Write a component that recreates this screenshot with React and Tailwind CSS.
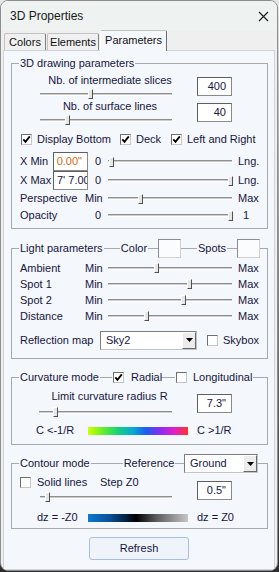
import React from "react";

const ink = "text-[#161640]";

function Checkbox({ checked }) {
  return (
    <span className="inline-flex w-[11px] h-[11px] shrink-0 items-center justify-center bg-white border border-[#6f6f6f] border-b-[#c6c6c6] border-r-[#c6c6c6]">
      {checked && (
        <svg width="9" height="9" viewBox="0 0 9 9">
          <path d="M1.3 4.3 L3.5 6.8 L7.8 1.4" fill="none" stroke="#000" strokeWidth="1.8" />
        </svg>
      )}
    </span>
  );
}

function Slider({ className = "", pos }) {
  // pos = thumb centre, px from the left end of the track
  return (
    <div className={"relative h-[12px] flex items-center " + className}>
      <div className="w-full h-[3px] border-t border-[#8e8e8e] bg-[#cdcdcd] border-b border-b-white" />
      <div
        className="absolute top-[1px] w-[5px] h-[10px] bg-[#e6e6e6] border border-t-white border-l-white border-r-[#505050] border-b-[#505050]"
        style={{ left: pos - 2 }}
      />
    </div>
  );
}

function Box({ children, className = "" }) {
  return (
    <div
      className={
        "h-[19px] w-[35px] shrink-0 bg-white border border-[#8a8a8a] border-t-[#5f5f5f] border-l-[#5f5f5f] text-[11px] leading-[17px] text-right pr-[5px] overflow-hidden whitespace-nowrap " +
        ink +
        " " +
        className
      }
    >
      {children}
    </div>
  );
}

function Select({ value, className = "" }) {
  return (
    <div className={"flex shrink-0 h-[19px] bg-white border border-[#7d7d7d] border-b-[#c4c4c4] border-r-[#c4c4c4] " + className}>
      <span className={"flex-1 pl-[5px] text-[11px] leading-[17px] " + ink}>{value}</span>
      <span className="w-[14px] h-full flex items-center justify-center bg-[#ececec] border border-t-white border-l-white border-r-[#6a6a6a] border-b-[#6a6a6a]">
        <svg width="7" height="4" viewBox="0 0 7 4">
          <path d="M0 0h7L3.5 4z" fill="#000" />
        </svg>
      </span>
    </div>
  );
}

function Swatch({ className = "" }) {
  return <span className={"shrink-0 w-[23px] h-[19px] bg-[#fbfcfe] border border-[#8c8c8c] border-b-[#d0d0d0] border-r-[#d0d0d0] " + className} />;
}

function Group({ header, className = "", children }) {
  return (
    <div className={"relative ml-[7px] w-[257px] border border-[#a9a9a9] " + className}>
      {header}
      {children}
    </div>
  );
}

// fixed slot on the group's top line; the text itself masks the line
function Legend({ children, className = "", center }) {
  return (
    <span className={"shrink-0 flex " + (center ? "justify-center " : "") + className}>
      <span className="shrink-0 bg-[#f4f7fb] px-[1px]">{children}</span>
    </span>
  );
}

function MinMaxRow({ label, pos }) {
  return (
    <div className="flex items-center h-[16px] pl-[8px]">
      <span className="w-[65px]">{label}</span>
      <span className="w-[23px]">Min</span>
      <Slider className="w-[124px]" pos={pos} />
      <span className="ml-[6px]">Max</span>
    </div>
  );
}

export default function App() {
  return (
    <div className="w-[279px] h-[572px] bg-linear-to-b from-[#e6e6e6] to-[#2c2c2c] font-['Liberation_Sans',Arial,sans-serif]">
      <div className="w-[278px] h-[571px] rounded-[8px] border border-[#8d8d8d] bg-[#efefef] overflow-hidden flex flex-col">
        {/* title bar */}
        <div className="h-[30px] shrink-0 bg-[#eef2f1] flex items-center justify-between pl-[9px] pr-[8px]">
          <span className="text-[12px] text-[#1a1a1a]">3D Properties</span>
          <svg width="11" height="11" viewBox="0 0 11 11">
            <path d="M1 1L10 10M10 1L1 10" stroke="#1a1a1a" strokeWidth="1.1" />
          </svg>
        </div>

        {/* tabs */}
        <div className="h-[19px] shrink-0 flex items-end pl-[3px] text-[11px] text-[#111]">
          <div className="w-[42px] h-[17px] flex items-center justify-center border border-b-0 border-[#c2c2c2] border-r-[#7f7f7f] rounded-t-[2px] bg-[#f0f0f0]">
            Colors
          </div>
          <div className="ml-[1px] w-[52px] h-[17px] flex items-center justify-center border border-b-0 border-[#c2c2c2] border-r-[#7f7f7f] rounded-t-[2px] bg-[#f0f0f0]">
            Elements
          </div>
          <div className="relative z-10 ml-[1px] -mb-[1px] w-[67px] h-[21px] pb-[2px] flex items-center justify-center border border-b-0 border-[#c2c2c2] border-l-white border-r-[#6f6f6f] rounded-t-[2px] bg-[#f4f7fb]">
            Parameters
          </div>
        </div>

        {/* panel */}
        <div className={"flex-1 ml-[2px] w-[272px] border border-[#cfd2d6] bg-[#f4f7fb] text-[11px] leading-[13px] whitespace-nowrap " + ink}>
          {/* 3D drawing parameters */}
          <Group
            className="mt-[12px] pt-[10px] pb-[4px]"
            header={
              <div className="absolute left-[7px] -top-[7px] h-[13px] flex items-center">
                <Legend>3D drawing parameters</Legend>
              </div>
            }
          >
            <div className="flex">
              <div className="ml-[28px] w-[140px]">
                <div className="text-center h-[13px]">Nb. of intermediate slices</div>
                <Slider className="mt-[1px] w-[132px]" pos={50} />
              </div>
              <Box className="ml-[17px] mt-[3px]">400</Box>
            </div>
            <div className="flex">
              <div className="ml-[28px] w-[140px]">
                <div className="text-center h-[13px]">Nb. of surface lines</div>
                <Slider className="mt-[1px] w-[132px]" pos={27} />
              </div>
              <Box className="ml-[17px] mt-[3px]">40</Box>
            </div>
            <div className="mt-[7px] h-[13px] pl-[9px] flex items-center">
              <span className="w-[99px] flex items-center gap-[5px]">
                <Checkbox checked />
                Display Bottom
              </span>
              <span className="w-[51px] flex items-center gap-[5px]">
                <Checkbox checked />
                Deck
              </span>
              <span className="flex items-center gap-[5px]">
                <Checkbox checked />
                Left and Right
              </span>
            </div>
            <div className="mt-[6px] h-[19px] pl-[8px] flex items-center">
              <span className="w-[33px]">X Min</span>
              <Box className="h-[18px] !text-[#cc6a12]">0.00"</Box>
              <span className="w-[20px] pl-[7px]">0</span>
              <Slider className="w-[124px]" pos={3} />
              <span className="ml-[6px]">Lng.</span>
            </div>
            <div className="h-[19px] pl-[8px] flex items-center">
              <span className="w-[33px]">X Max</span>
              <Box className="h-[17px] !text-left !pr-0 pl-[3px] leading-[15px]">7' 7.00"</Box>
              <span className="w-[20px] pl-[7px]">0</span>
              <Slider className="w-[124px]" pos={122} />
              <span className="ml-[6px]">Lng.</span>
            </div>
            <div className="flex items-center h-[17px] pl-[8px]">
              <span className="w-[65px]">Perspective</span>
              <span className="w-[23px]">Min</span>
              <Slider className="w-[124px]" pos={32} />
              <span className="ml-[6px]">Max</span>
            </div>
            <div className="flex items-center h-[17px] pl-[8px]">
              <span className="w-[65px]">Opacity</span>
              <span className="w-[23px] pl-[10px]">0</span>
              <Slider className="w-[124px]" pos={122} />
              <span className="ml-[11px]">1</span>
            </div>
          </Group>

          {/* Light parameters */}
          <Group
            className="mt-[19px] pt-[11px] pb-[8px]"
            header={
              <div className="absolute left-[7px] -top-[10px] h-[19px] flex items-center">
                <Legend className="w-[80px]">Light parameters</Legend>
                <Legend center className="ml-[22px] w-[26px]">Color</Legend>
                <Swatch className="ml-[11px]" />
                <Legend center className="ml-[17px] w-[28px]">Spots</Legend>
                <Swatch className="ml-[11px]" />
              </div>
            }
          >
            <MinMaxRow label="Ambient" pos={48} />
            <MinMaxRow label="Spot 1" pos={81} />
            <MinMaxRow label="Spot 2" pos={75} />
            <MinMaxRow label="Distance" pos={38} />
            <div className="mt-[6px] h-[20px] pl-[8px] flex items-center">
              <span className="w-[80px]">Reflection map</span>
              <Select value="Sky2" className="w-[97px]" />
              <span className="ml-[10px] flex">
                <Checkbox />
              </span>
              <span className="ml-[5px]">Skybox</span>
            </div>
          </Group>

          {/* Curvature mode */}
          <Group
            className="mt-[18px] pt-[12px] pb-[7px]"
            header={
              <div className="absolute left-[7px] -top-[7px] h-[13px] flex items-center">
                <Legend className="w-[77px]">Curvature mode</Legend>
                <span className="shrink-0 ml-[16px] flex items-center gap-[7px] bg-[#f4f7fb] px-[1px]">
                  <Checkbox checked />
                  <span className="w-[29px]">Radial</span>
                </span>
                <span className="shrink-0 ml-[14px] flex items-center gap-[6px] bg-[#f4f7fb] px-[1px]">
                  <Checkbox />
                  <span>Longitudinal</span>
                </span>
              </div>
            }
          >
            <div className="flex">
              <div className="ml-[27px] w-[141px]">
                <div className="text-center h-[13px]">Limit curvature radius R</div>
                <Slider className="mt-[3px] w-[133px]" pos={16} />
              </div>
              <Box className="ml-[17px] mt-[4px]">7.3"</Box>
            </div>
            <div className="mt-[6px] h-[13px] pl-[24px] flex items-center">
              <span className="w-[52px]">C &lt;-1/R</span>
              <span className="w-[100px] h-[8px] bg-[linear-gradient(to_right,#d2ff00,#6cf02a_14%,#14d27a_30%,#0aa6d8_45%,#1c5cf0_58%,#8a2cf2_72%,#e020c8_86%,#ff3424)]" />
              <span className="ml-[9px]">C &gt;1/R</span>
            </div>
          </Group>

          {/* Contour mode */}
          <Group
            className="mt-[18px] pt-[12px] pb-[4px]"
            header={
              <div className="absolute left-[7px] -top-[10px] h-[19px] flex items-center">
                <Legend className="w-[68px]">Contour mode</Legend>
                <Legend center className="ml-[36px] w-[52px]">Reference</Legend>
                <Select value="Ground" className="ml-[9px] w-[74px]" />
              </div>
            }
          >
            <div className="flex">
              <div className="w-[185px]">
                <div className="h-[13px] pl-[8px] flex items-center">
                  <Checkbox />
                  <span className="ml-[6px] w-[63px]">Solid lines</span>
                  <span>Step Z0</span>
                </div>
                <Slider className="mt-[2px] ml-[28px] w-[132px]" pos={7} />
              </div>
              <Box className="mt-[5px] h-[18px]">0.5"</Box>
            </div>
            <div className="mt-[8px] h-[13px] pl-[25px] flex items-center">
              <span className="w-[51px]">dz = -Z0</span>
              <span className="w-[100px] h-[8px] bg-[linear-gradient(to_right,#0a7ad4,#0a4f92_22%,#05203e_38%,#000_48%,#5a5a5a_68%,#c6c6c6)]" />
              <span className="ml-[9px]">dz = Z0</span>
            </div>
          </Group>

          <div className="mt-[8px] flex justify-center">
            <button className={"w-[100px] h-[23px] rounded-[3px] border border-[#a9bdea] bg-[#eff3fa] text-[11px] " + ink}>
              Refresh
            </button>
          </div>
        </div>
      </div>
    </div>
  );
}
